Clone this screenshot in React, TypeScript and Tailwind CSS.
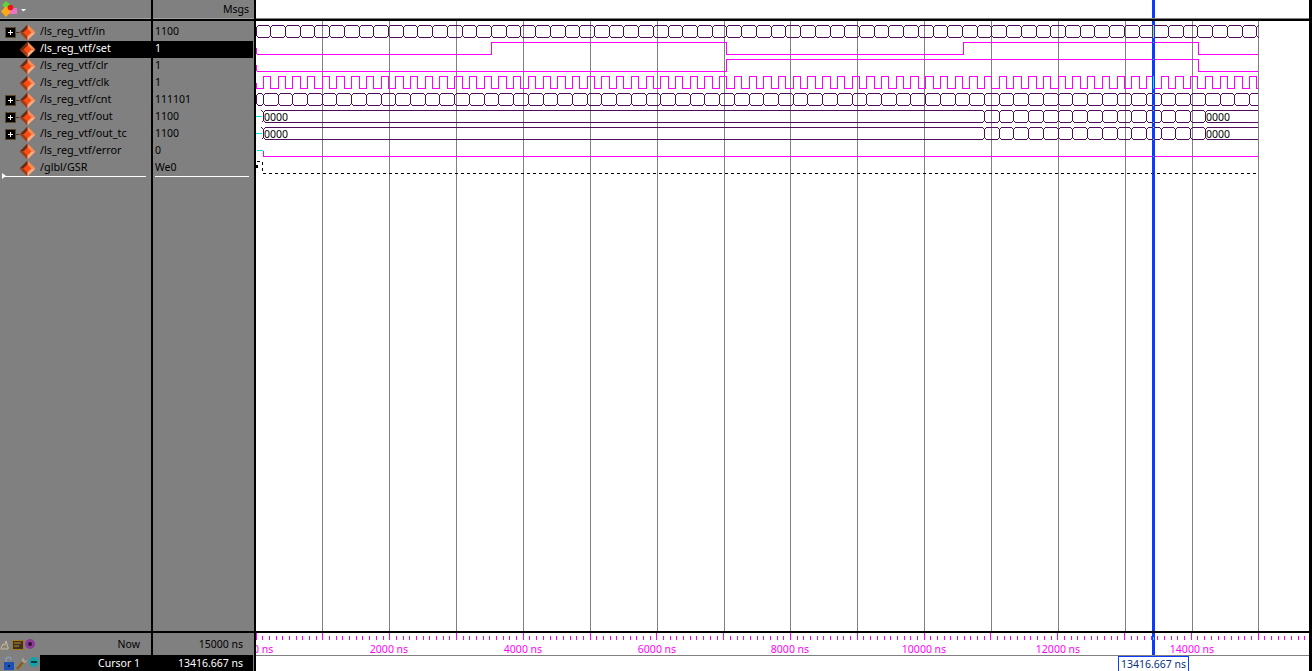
const signals = [
  { name: '/ls_reg_vtf/in', value: '1100', bus: true },
  { name: '/ls_reg_vtf/set', value: '1', bus: false, selected: true },
  { name: '/ls_reg_vtf/clr', value: '1', bus: false },
  { name: '/ls_reg_vtf/clk', value: '1', bus: false },
  { name: '/ls_reg_vtf/cnt', value: '111101', bus: true },
  { name: '/ls_reg_vtf/out', value: '1100', bus: true },
  { name: '/ls_reg_vtf/out_tc', value: '1100', bus: true },
  { name: '/ls_reg_vtf/error', value: '0', bus: false },
  { name: '/glbl/GSR', value: 'We0', bus: false },
]

const gridLines = [322, 389, 456, 523, 590, 657, 724, 790, 857, 924, 991, 1058, 1125, 1192, 1258]
const labels = [
  { text: '2000 ns', x: 389 },
  { text: '4000 ns', x: 523 },
  { text: '6000 ns', x: 657 },
  { text: '8000 ns', x: 790 },
  { text: '10000 ns', x: 924 },
  { text: '12000 ns', x: 1058 },
  { text: '14000 ns', x: 1192 },
]

const PINK = '#ff00ff'
const BUS = '#4f0a5c'
const FONT = "font-['Noto_Sans',sans-serif]"

// ns to pixel, same origin as the page so the numbers read like the screenshot
const px = (t: number) => Math.round(255.5 + t * 0.0669)

const range = (from: number, to: number, step: number) => {
  const out: number[] = []
  for (let t = from; t <= to; t += step) out.push(t)
  return out
}

// one digital signal, list of [time, level] with level 0 = high line, 1 = low line
function stepPath(top: number, changes: [number, number][]) {
  const y = (l: number) => top + (l ? 12 : 0) + 0.5
  let d = `M${px(changes[0][0]) + 0.5} ${y(changes[0][1])}`
  changes.slice(1).forEach(([t, l]) => {
    d += `H${px(t) + 0.5}V${y(l)}`
  })
  return d + 'H1258'
}

// bus drawn as chamfered boxes between transition times
function busPath(top: number, times: number[], endX = 1258) {
  const hi = top + 0.5
  const lo = top + 12.5
  let d = ''
  times.forEach((t, i) => {
    const x = px(t) + 0.5
    const next = i + 1 < times.length ? px(times[i + 1]) - 1.5 : endX
    d += `M${x - 2} ${hi}L${x} ${hi + 2}V${lo - 2}L${x - 2} ${lo}`
    d += `M${x} ${hi + 2}L${x + 2} ${hi}H${next}M${x} ${lo - 2}L${x + 2} ${lo}H${next}`
  })
  return d
}

function clockPath() {
  let d = 'M256.5 82.5V88.5'
  for (const t of range(110, 15000, 110)) {
    const high = (t - 110) % 220 === 0
    d += `H${px(t) + 0.5}V${high ? 76.5 : 88.5}`
  }
  return d + 'H1258'
}

const outTimes = [110, ...range(10890, 14190, 220)]

function Diamond() {
  return (
    <svg width="17" height="17" viewBox="0 0 17 17" className="shrink-0">
      <polygon points="8.5,0.5 16.5,8.5 12,8.5 8.5,5" fill="#ff8a54" />
      <polygon points="8.5,0.5 0.5,8.5 5,8.5 8.5,5" fill="#6e2a10" />
      <polygon points="0.5,8.5 8.5,16.5 8.5,12 5,8.5" fill="#a03c16" />
      <polygon points="16.5,8.5 8.5,16.5 8.5,12 12,8.5" fill="#ffac80" />
      <polygon points="8.5,4.5 12.5,8.5 8.5,12.5 4.5,8.5" fill="#ff4a10" />
    </svg>
  )
}

function Expander() {
  return (
    <div className="relative flex h-[9px] w-[9px] shrink-0 items-center justify-center bg-black shadow-[0_0_0_1px_#5a4a2a]">
      <div className="absolute h-px w-[5px] bg-white" />
      <div className="absolute h-[5px] w-px bg-white" />
    </div>
  )
}

function LogoIcon() {
  return (
    <svg width="27" height="18" viewBox="0 0 27 18">
      <polygon points="6,1 11,5 6,9 2,5" fill="#5fd23c" />
      <rect x="9" y="8" width="8" height="6" fill="#f070c8" />
      <polygon points="6,6 11,11.5 6,17 1,11.5" fill="#ffa818" />
      <circle cx="10.5" cy="7.5" r="2.8" fill="#e81818" />
      <polygon points="21,9 26,9 23.5,11.5" fill="#ffffff" />
    </svg>
  )
}

function NowIcons() {
  return (
    <svg width="36" height="14" viewBox="0 0 36 14">
      <path d="M1 11 L3 7 L5 8 L6 4 L8 10 V12 H1 Z" fill="#8c8478" stroke="#c8b898" strokeWidth="1" />
      <rect x="12.5" y="3.5" width="11" height="9" fill="#3c3020" stroke="#a8761c" strokeWidth="1" />
      <path d="M14 6H21M14 9H19" stroke="#b88a30" />
      <circle cx="30" cy="7" r="5" fill="#8c3a98" />
      <circle cx="30" cy="7" r="2" fill="#301038" />
    </svg>
  )
}

function CursorIcons() {
  return (
    <svg width="40" height="16" viewBox="0 0 40 16">
      <path d="M6 7V4.5a2.5 2.5 0 0 1 5 0" fill="none" stroke="#8ca0c0" strokeWidth="1.2" />
      <rect x="4" y="7" width="10" height="8" fill="#1c50b4" />
      <rect x="8" y="10" width="2" height="2" fill="#10204a" />
      <path d="M17 14 L24 6" stroke="#8c5c14" strokeWidth="2.4" />
      <path d="M23 2.5 A3 3 0 0 0 24 8 A3 3 0 0 0 27 5 L25 6 L24 4 Z" fill="#a8a090" />
      <circle cx="34" cy="7" r="5" fill="#18a0a8" />
      <rect x="31" y="6" width="6" height="2" fill="#0c3c44" />
    </svg>
  )
}

function SignalName({ name, bus, selected }: { name: string; bus: boolean; selected?: boolean }) {
  return (
    <div className={`flex h-[17px] items-center ${selected ? 'bg-black text-white' : ''}`}>
      <div className="flex w-[19px] items-center justify-end pl-[6px]">
        {bus && (
          <>
            <Expander />
            <div className="h-px w-[4px] bg-[#4a3018]" />
          </>
        )}
      </div>
      <Diamond />
      <span className="ml-[4px] whitespace-nowrap pb-[2px] text-[10.8px]">{name}</span>
    </div>
  )
}

export default function App() {
  const ticks = range(0, 15700, 100)

  return (
    <div className={`flex h-[671px] w-[1312px] overflow-hidden bg-[#808080] text-[10.5px] leading-none text-black ${FONT}`}>
      {/* signal names */}
      <div className="flex w-[151px] shrink-0 flex-col">
        <div className="flex h-[18px] items-start">
          <LogoIcon />
        </div>
        <div className="h-px bg-[#a0a0a0]" />
        <div className="h-[2px] bg-black" />
        <div className="mt-[3px]">
          {signals.map((s) => (
            <SignalName key={s.name} name={s.name} bus={s.bus} selected={s.selected} />
          ))}
        </div>
        <div className="relative mt-[-1px] ml-[5px] mr-[5px] h-px bg-white">
          <div className="absolute left-[-3px] top-[-3px] h-0 w-0 border-y-[3px] border-l-[4px] border-y-transparent border-l-white" />
        </div>
        <div className="flex-1" />
        <div className="h-[2px] bg-black" />
        <div className="flex h-[22px] items-center justify-between pr-[11px]">
          <NowIcons />
          <span>Now</span>
        </div>
        <div className="flex h-[16px] items-center">
          <CursorIcons />
          <div className="flex h-full flex-1 items-center justify-end bg-black pr-[11px] text-white">Cursor 1</div>
        </div>
      </div>

      <div className="w-[2px] shrink-0 bg-black" />

      {/* values */}
      <div className="flex w-[101px] shrink-0 flex-col">
        <div className="flex h-[18px] items-center justify-end pr-[5px] pt-[1px]">Msgs</div>
        <div className="h-px bg-[#a0a0a0]" />
        <div className="h-[2px] bg-black" />
        <div className="mt-[3px]">
          {signals.map((s) => (
            <div
              key={s.name}
              className={`mr-px flex h-[17px] items-center pb-[2px] pl-[2px] ${s.selected ? 'bg-black text-white' : ''}`}
            >
              {s.value}
            </div>
          ))}
        </div>
        <div className="mt-[-1px] ml-[2px] mr-[5px] h-px bg-white" />
        <div className="flex-1" />
        <div className="h-[2px] bg-black" />
        <div className="flex h-[22px] items-center justify-end pr-[11px]">15000 ns</div>
        <div className="mr-px flex h-[16px] items-center justify-end bg-black pr-[10px] text-white">13416.667 ns</div>
      </div>

      <div className="w-[2px] shrink-0 bg-black" />

      {/* wave window */}
      <div className="flex w-[1053px] shrink-0 flex-col bg-white">
        <div className="relative h-[18px]">
          <div className="absolute left-[896px] top-0 h-full w-[3px] bg-[#0a3cff]" />
        </div>
        <div className="h-px bg-[#808080]" />
        <div className="h-[2px] bg-black" />

        <svg width="1053" height="610" viewBox="256 21 1053 610" className="block" shapeRendering="crispEdges" fill="none">
          {gridLines.map((x) => (
            <path key={x} d={`M${x + 0.5} 21V631`} stroke="#808080" />
          ))}

          <path d={busPath(25, range(0, 15000, 220))} stroke={BUS} />
          <path d={stepPath(42, [[0, 1], [3520, 0], [7030, 1], [10570, 0], [14090, 1]])} stroke={PINK} />
          <path d="M256.5 48V54" stroke={PINK} />
          <path d={stepPath(59, [[0, 1], [7030, 0], [14090, 1]])} stroke={PINK} />
          <path d="M256.5 65V71" stroke={PINK} />
          <path d={clockPath()} stroke={PINK} />
          <path d={busPath(93, [0, ...range(110, 15000, 220)])} stroke={BUS} />
          <path d={busPath(110, outTimes)} stroke={BUS} />
          <path d={busPath(127, outTimes)} stroke={BUS} />
          <path d="M256 116.5H262M256 133.5H262M257 150.5H263" stroke="#00e8f0" />
          <path d="M263.5 151V156.5H1258" stroke={PINK} />
          <path d="M257 161.5H262.5V173.5H1257" stroke="#000000" strokeDasharray="3 3" />
          <rect x="256" y="165" width="2" height="3" fill="#000000" />

          <text x="264" y="121" fontSize="10.5" fill="#000000" stroke="none">0000</text>
          <text x="264" y="138" fontSize="10.5" fill="#000000" stroke="none">0000</text>
          <text x="1206" y="121" fontSize="10.5" fill="#000000" stroke="none">0000</text>
          <text x="1206" y="138" fontSize="10.5" fill="#000000" stroke="none">0000</text>

          {/* cursor, with the little marks where it crosses the traces */}
          <rect x="1152" y="21" width="3" height="610" fill="#0a3cff" />
          <path d="M1153.5 25V38M1153.5 93V94M1153.5 105V106M1153.5 110V111M1153.5 122V123M1153.5 127V128M1153.5 139V140" stroke="#c8c820" />
          <path d="M1153.5 42V43M1153.5 59V60M1153.5 76V89M1153.5 156V157" stroke="#20d8f0" />
          <path d="M1153.5 173V174" stroke="#101010" />
        </svg>

        <div className="h-[2px] bg-black" />

        <svg width="1053" height="22" viewBox="256 633 1053 22" className="block" fill="none">
          <g shapeRendering="crispEdges">
            {ticks.map((t) => (
              <path
                key={t}
                d={`M${Math.round(255.6 + t * 0.0668) + 0.5} ${t % 1000 === 0 ? 633 : 636}V640`}
                stroke={PINK}
              />
            ))}
            <rect x="1152" y="633" width="3" height="22" fill="#0a3cff" />
            <path d="M1153.5 637V640" stroke="#20d8f0" />
          </g>
          {/* the 0 ns label is clipped by the window edge in the original too */}
          <text x="253" y="653" fontSize="10.5" fill={PINK}>0 ns</text>
          {labels.map((l) => (
            <text key={l.text} x={l.x} y="653" fontSize="10.5" textAnchor="middle" fill={PINK}>
              {l.text}
            </text>
          ))}
        </svg>

        <div className="h-px bg-[#808080]" />

        <div className="flex h-[15px] items-start pl-[862px]">
          <div className="flex h-[15px] w-[71px] items-center justify-center border border-b-0 border-[#0a3cff] text-[#0a3080]">
            13416.667 ns
          </div>
        </div>
      </div>

      <div className="w-[3px] shrink-0 bg-black" />
    </div>
  )
}
